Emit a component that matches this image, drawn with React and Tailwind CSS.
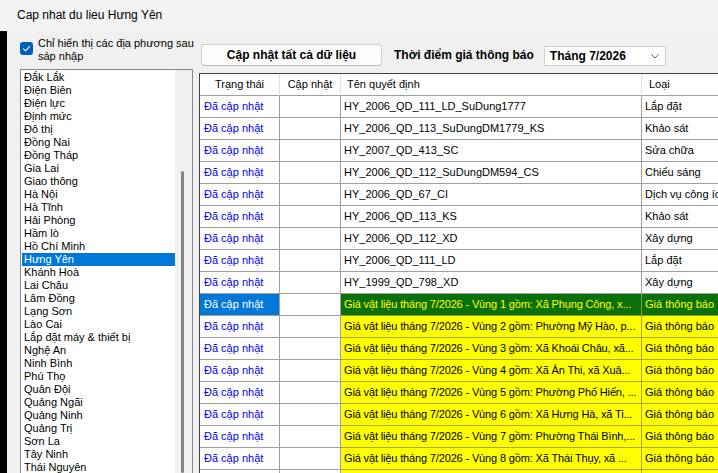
import React from "react";

const provinces = [
  "Đắk Lắk", "Điện Biên", "Điện lực", "Định mức", "Đô thị", "Đồng Nai", "Đồng Tháp",
  "Gia Lai", "Giao thông", "Hà Nội", "Hà Tĩnh", "Hải Phòng", "Hầm lò", "Hồ Chí Minh",
  "Hưng Yên", "Khánh Hoà", "Lai Châu", "Lâm Đồng", "Lạng Sơn", "Lào Cai",
  "Lắp đặt máy & thiết bị", "Nghệ An", "Ninh Bình", "Phú Thọ", "Quân Đội",
  "Quảng Ngãi", "Quảng Ninh", "Quảng Trị", "Sơn La", "Tây Ninh", "Thái Nguyên",
  "Thanh Hoá", "Tuyên Quang",
];

const rows = [
  { name: "HY_2006_QD_111_LD_SuDung1777", type: "Lắp đặt", kind: "n" },
  { name: "HY_2006_QD_113_SuDungDM1779_KS", type: "Khảo sát", kind: "n" },
  { name: "HY_2007_QD_413_SC", type: "Sửa chữa", kind: "n" },
  { name: "HY_2006_QD_112_SuDungDM594_CS", type: "Chiếu sáng", kind: "n" },
  { name: "HY_2006_QD_67_CI", type: "Dịch vụ công ích", kind: "n" },
  { name: "HY_2006_QD_113_KS", type: "Khảo sát", kind: "n" },
  { name: "HY_2006_QD_112_XD", type: "Xây dựng", kind: "n" },
  { name: "HY_2006_QD_111_LD", type: "Lắp đặt", kind: "n" },
  { name: "HY_1999_QD_798_XD", type: "Xây dựng", kind: "n" },
  { name: "Giá vật liệu tháng 7/2026 - Vùng 1 gồm: Xã Phụng Công, x...", type: "Giá thông báo", kind: "s" },
  { name: "Giá vật liệu tháng 7/2026 - Vùng 2 gồm: Phường Mỹ Hào, p...", type: "Giá thông báo", kind: "y" },
  { name: "Giá vật liệu tháng 7/2026 - Vùng 3 gồm: Xã Khoái Châu, xã...", type: "Giá thông báo", kind: "y" },
  { name: "Giá vật liệu tháng 7/2026 - Vùng 4 gồm: Xã Ân Thi, xã Xuâ...", type: "Giá thông báo", kind: "y" },
  { name: "Giá vật liệu tháng 7/2026 - Vùng 5 gồm: Phường Phố Hiến, ...", type: "Giá thông báo", kind: "y" },
  { name: "Giá vật liệu tháng 7/2026 - Vùng 6 gồm: Xã Hưng Hà, xã Ti...", type: "Giá thông báo", kind: "y" },
  { name: "Giá vật liệu tháng 7/2026 - Vùng 7 gồm: Phường Thái Bình,...", type: "Giá thông báo", kind: "y" },
  { name: "Giá vật liệu tháng 7/2026 - Vùng 8 gồm: Xã Thái Thụy, xã ...", type: "Giá thông báo", kind: "y" },
  { name: "Giá vật liệu tháng 7/2026 - Vùng 9 gồm: Xã Tiền Hải, xã ...", type: "Giá thông báo", kind: "y" },
];

function Row({ r }) {
  const sel = r.kind === "s";
  const yel = r.kind === "y";
  const c1 = sel ? "bg-[#0078d7] text-white" : "bg-white text-[#0000ff]";
  const c34 = sel
    ? "bg-[#0a700a] text-[#ffff00] border-[#8a9a3a]"
    : yel
    ? "bg-[#ffff00] text-black border-[#a8a840]"
    : "bg-white text-black border-[#a0a0a0]";
  const track = sel || yel ? "tracking-[-0.15px]" : "";
  return (
    <div className="flex h-[22px] shrink-0">
      <div className={`w-[80px] shrink-0 border-r border-b border-[#a0a0a0] pl-[4px] flex items-center whitespace-nowrap overflow-hidden ${c1}`}>
        Đã cập nhật
      </div>
      <div className="w-[61px] shrink-0 border-r border-b border-[#a0a0a0] bg-white" />
      <div className={`w-[301px] shrink-0 border-r border-b pl-[3px] flex items-center whitespace-nowrap overflow-hidden ${track} ${c34}`}>
        {r.name}
      </div>
      <div className={`w-[120px] shrink-0 border-r border-b pl-[3px] flex items-center whitespace-nowrap overflow-hidden ${c34}`}>
        {r.type}
      </div>
    </div>
  );
}

export default function App() {
  return (
    <div className="w-[718px] h-[473px] overflow-hidden bg-[#f0f0f0] text-[11px] leading-[13px] text-black font-['Liberation_Sans',Arial,sans-serif] flex flex-col">
      {/* Title bar */}
      <div className="h-[31px] shrink-0 bg-[#f3f3f3] flex items-center pl-[17px] text-[12px]">
        Cap nhat du lieu Hưng Yên
      </div>

      <div className="flex flex-1 min-h-0">
        {/* black strip */}
        <div className="w-[7px] shrink-0 bg-black" />

        {/* left panel */}
        <div className="w-[192px] shrink-0 pl-[13px] pt-[6px] flex flex-col min-h-0">
          <div className="flex items-start h-[26px]">
            <div className="mt-[5px] w-[13px] h-[13px] rounded-[3px] bg-[#005fb8] flex items-center justify-center shrink-0">
              <svg width="9" height="9" viewBox="0 0 9 9" fill="none">
                <path d="M1.5 4.8 L3.6 6.8 L7.6 2.4" stroke="white" strokeWidth="1.1" strokeLinecap="round" strokeLinejoin="round" />
              </svg>
            </div>
            <div className="ml-[5px] leading-[13px] text-[11px] whitespace-nowrap">
              <div>Chỉ hiển thị các địa phương sau</div>
              <div>sáp nhập</div>
            </div>
          </div>

          <div className="mt-[6px] w-[173px] flex-1 min-h-0 border border-[#828790] border-b-0 bg-white flex">
            <div className="flex-1 min-w-0 pl-[1px] pt-[1px] overflow-hidden">
              {provinces.map((p) => (
                <div
                  key={p}
                  className={`h-[13px] pl-[2px] leading-[13px] whitespace-nowrap ${
                    p === "Hưng Yên" ? "bg-[#0078d7] text-white" : ""
                  }`}
                >
                  {p}
                </div>
              ))}
            </div>
            <div className="w-[17px] shrink-0 bg-[#f0f0f0] pt-[101px] pl-[6px]">
              <div className="w-[3px] h-full rounded-full bg-[#858585]" />
            </div>
          </div>
        </div>

        {/* right panel */}
        <div className="flex-1 min-w-0 pt-[13px] flex flex-col">
          <div className="flex items-end h-[22px] pl-[2px] text-[12px]">
            <button className="w-[181px] h-[22px] bg-[#fdfdfd] border border-[#d0d0d0] border-b-[#b8b8b8] rounded-[4px] font-bold flex items-center justify-center">
              Cập nhật tất cả dữ liệu
            </button>
            <div className="ml-[12px] h-[22px] flex items-center font-bold whitespace-nowrap">
              Thời điểm giá thông báo
            </div>
            <div className="ml-[10px] w-[122px] h-[20px] bg-white border border-[#cfcfcf] flex items-center justify-between pl-[5px] pr-[6px]">
              <span className="font-bold">Tháng 7/2026</span>
              <svg width="8" height="5" viewBox="0 0 8 5" fill="none">
                <path d="M0.5 0.5 L4 4 L7.5 0.5" stroke="#6a6a6a" strokeWidth="1" />
              </svg>
            </div>
          </div>

          {/* grid */}
          <div className="mt-[7px] flex-1 min-h-0 border-l border-t border-[#404040] overflow-hidden flex flex-col">
            <div className="flex h-[22px] shrink-0 bg-white">
              <div className="w-[80px] shrink-0 border-r border-b border-[#e0e0e0] border-b-[#a0a0a0] flex items-center justify-center">
                Trạng thái
              </div>
              <div className="w-[61px] shrink-0 border-r border-b border-[#e0e0e0] border-b-[#a0a0a0] flex items-center justify-center">
                Cập nhật
              </div>
              <div className="w-[301px] shrink-0 border-r border-b border-[#e0e0e0] border-b-[#a0a0a0] flex items-center pl-[6px]">
                Tên quyết định
              </div>
              <div className="w-[120px] shrink-0 border-r border-b border-[#e0e0e0] border-b-[#a0a0a0] flex items-center pl-[7px]">
                Loại
              </div>
            </div>
            {rows.map((r, i) => (
              <Row key={i} r={r} />
            ))}
          </div>
        </div>
      </div>
    </div>
  );
}
